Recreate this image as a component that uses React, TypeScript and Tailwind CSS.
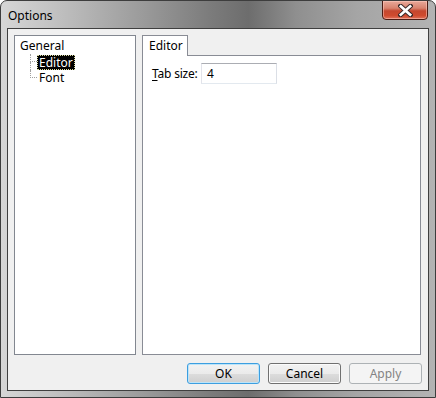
import React from "react";

const font = { fontFamily: '"Noto Sans", "Open Sans", Arial, sans-serif' };

function Btn({ label, kind }: { label: string; kind: "default" | "normal" | "disabled" }) {
  const cls =
    kind === "default"
      ? "border-[#3c9ee0] shadow-[inset_0_0_0_1px_#bde4f8] text-black bg-[linear-gradient(#f2f2f2_0%,#ebebeb_50%,#dddddd_51%,#cfcfcf_100%)]"
      : kind === "normal"
      ? "border-[#707070] shadow-[inset_0_0_0_1px_#fbfbfb] text-black bg-[linear-gradient(#f2f2f2_0%,#ebebeb_50%,#dddddd_51%,#cfcfcf_100%)]"
      : "border-[#adb2b5] text-[#838383] bg-[#f4f4f4]";
  return (
    <div
      className={`w-[73px] h-[21px] rounded-[3px] border flex items-center justify-center text-[12px] leading-none ${cls}`}
    >
      {label}
    </div>
  );
}

export default function App() {
  return (
    <div
      style={font}
      className="w-[436px] h-[398px] flex flex-col border border-[#3d3d3d] rounded-t-[7px] overflow-hidden bg-[linear-gradient(90deg,#d6d6d6_0%,#c2c2c2_12%,#9c9c9c_32%,#7c7c7c_48%,#6d6d6d_57%,#8f8f8f_68%,#a5a5a5_82%,#b3b3b3_100%)]"
    >
      {/* title bar */}
      <div className="relative h-[27px] flex items-center pl-[7px]">
        <span className="text-[12px] text-black leading-none mt-[2px]">Options</span>
        <div className="absolute right-[7px] top-[-1px] w-[46px] h-[20px] rounded-b-[4px] border border-[#4a1c14] bg-[linear-gradient(#e9a99a_0%,#d8826e_40%,#c5472f_55%,#cf4a2e_80%,#e0715a_100%)] shadow-[inset_0_0_0_1px_rgba(255,210,200,0.5)] flex items-center justify-center">
          <svg width="15" height="13" viewBox="0 0 15 13">
            <path
              d="M2.5 2 L12.5 11 M12.5 2 L2.5 11"
              stroke="#3a2a2a"
              strokeWidth="4.6"
              strokeLinecap="square"
            />
            <path
              d="M2.8 2.3 L12.2 10.7 M12.2 2.3 L2.8 10.7"
              stroke="#ffffff"
              strokeWidth="2.6"
              strokeLinecap="square"
            />
          </svg>
        </div>
      </div>

      {/* client */}
      <div className="flex-1 mx-[6px] mb-[6px] border border-[#3f3f3f] bg-[#f0f0f0] flex flex-col pt-[6px] pb-[6px] px-[6px]">
        <div className="flex-1 flex gap-[6px] pr-[1px]">
          {/* tree */}
          <div className="w-[122px] border border-[#828790] bg-white pt-[2px] text-[12px] leading-[16px] text-black">
            <div className="h-[16px] pl-[5px] flex items-center">General</div>
            <div className="h-[16px] flex">
              <div className="ml-[15px] w-[7px] flex flex-col">
                <div className="h-[8px] border-l border-b border-dotted border-[#a0a0a0]" />
                <div className="h-[8px] border-l border-dotted border-[#a0a0a0]" />
              </div>
              <div className="flex items-center">
                <span className="bg-black text-white px-[1px] h-[15px] leading-[13px] border border-dotted border-[#d8d8a0]">
                  Editor
                </span>
              </div>
            </div>
            <div className="h-[16px] flex">
              <div className="ml-[15px] w-[7px] flex flex-col">
                <div className="h-[8px] border-l border-b border-dotted border-[#a0a0a0]" />
              </div>
              <div className="flex items-center pl-[2px]">Font</div>
            </div>
          </div>

          {/* tab control */}
          <div className="flex-1 flex flex-col">
            <div className="flex">
              <div className="relative z-10 -mb-px h-[21px] w-[46px] border border-b-0 border-[#898c95] bg-white text-[12px] pl-[6px] pt-[1px] leading-[18px]">
                Editor
              </div>
            </div>
            <div className="flex-1 border border-[#898c95] bg-white pt-[7px] pl-[9px]">
              <div className="flex items-center text-[12px]">
                <span className="w-[49px] tracking-[-0.2px]">
                  <span className="underline underline-offset-2">T</span>ab size:
                </span>
                <div className="w-[76px] h-[21px] border border-[#abadb3] border-l-[#e2e3ea] border-r-[#dbdfe6] border-b-[#e3e9ef] pl-[5px] flex items-center">
                  4
                </div>
              </div>
            </div>
          </div>
        </div>

        <div className="flex justify-end gap-[8px] mt-[8px]">
          <Btn label="OK" kind="default" />
          <Btn label="Cancel" kind="normal" />
          <Btn label="Apply" kind="disabled" />
        </div>
      </div>
    </div>
  );
}
